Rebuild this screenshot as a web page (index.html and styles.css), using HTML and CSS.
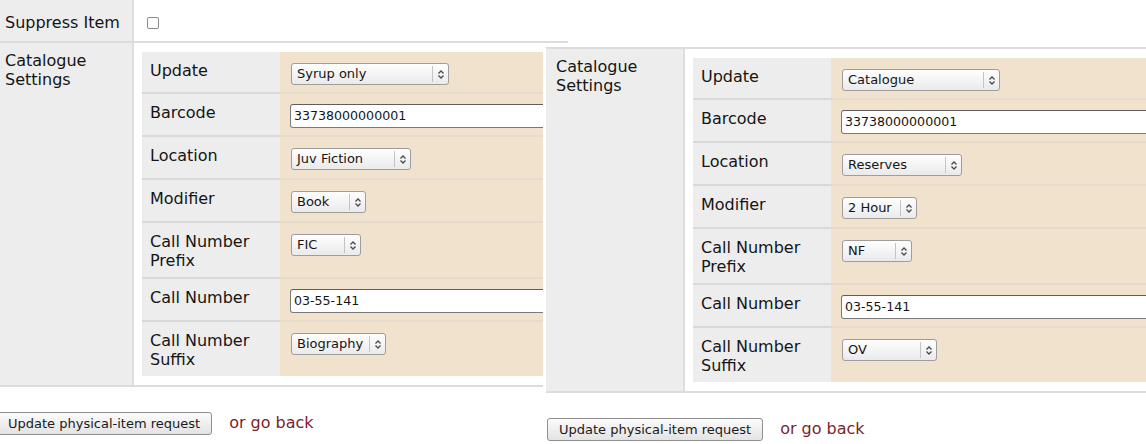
FILE: index.html
```html
<!DOCTYPE html>
<html lang="en">
<head>
<meta charset="utf-8">
<title>Update physical-item request</title>
<link rel="stylesheet" href="styles.css">
</head>
<body>
<div class="desk">

  <section class="shot shot-a">
    <div class="page page-a">
      <div class="orow stub">
        <div class="olabel"></div>
        <div class="ovalue"></div>
      </div>
      <div class="orow">
        <div class="olabel">Suppress Item</div>
        <div class="ovalue"><span class="checkbox"></span></div>
      </div>
      <div class="orow last">
        <div class="olabel">Catalogue Settings</div>
        <div class="ovalue cat">
          <div class="itable">
            <div class="irow">
              <div class="ilabel">Update</div>
              <div class="ivalue"><div class="select w-update"><span class="sel-text">Syrup only</span><span class="sel-btn"><svg width="8" height="11" viewBox="0 0 8 11"><path d="M1.5 4.5 L4 2 L6.5 4.5 M1.5 6.5 L4 9 L6.5 6.5" fill="none" stroke="#4a4a4a" stroke-width="1.3"/></svg></span></div></div>
            </div>
            <div class="irow">
              <div class="ilabel">Barcode</div>
              <div class="ivalue"><div class="input">33738000000001</div></div>
            </div>
            <div class="irow">
              <div class="ilabel">Location</div>
              <div class="ivalue"><div class="select w-location"><span class="sel-text">Juv Fiction</span><span class="sel-btn"><svg width="8" height="11" viewBox="0 0 8 11"><path d="M1.5 4.5 L4 2 L6.5 4.5 M1.5 6.5 L4 9 L6.5 6.5" fill="none" stroke="#4a4a4a" stroke-width="1.3"/></svg></span></div></div>
            </div>
            <div class="irow">
              <div class="ilabel">Modifier</div>
              <div class="ivalue"><div class="select w-modifier"><span class="sel-text">Book</span><span class="sel-btn"><svg width="8" height="11" viewBox="0 0 8 11"><path d="M1.5 4.5 L4 2 L6.5 4.5 M1.5 6.5 L4 9 L6.5 6.5" fill="none" stroke="#4a4a4a" stroke-width="1.3"/></svg></span></div></div>
            </div>
            <div class="irow">
              <div class="ilabel">Call Number Prefix</div>
              <div class="ivalue"><div class="select w-prefix"><span class="sel-text">FIC</span><span class="sel-btn"><svg width="8" height="11" viewBox="0 0 8 11"><path d="M1.5 4.5 L4 2 L6.5 4.5 M1.5 6.5 L4 9 L6.5 6.5" fill="none" stroke="#4a4a4a" stroke-width="1.3"/></svg></span></div></div>
            </div>
            <div class="irow">
              <div class="ilabel">Call Number</div>
              <div class="ivalue"><div class="input">03-55-141</div></div>
            </div>
            <div class="irow">
              <div class="ilabel">Call Number Suffix</div>
              <div class="ivalue"><div class="select w-suffix"><span class="sel-text">Biography</span><span class="sel-btn"><svg width="8" height="11" viewBox="0 0 8 11"><path d="M1.5 4.5 L4 2 L6.5 4.5 M1.5 6.5 L4 9 L6.5 6.5" fill="none" stroke="#4a4a4a" stroke-width="1.3"/></svg></span></div></div>
            </div>
          </div>
        </div>
      </div>
      <div class="actions">
        <button class="btn" type="button">Update physical-item request</button>
        <a class="back" href="#">or go back</a>
      </div>
    </div>
  </section>

  <section class="shot shot-b">
    <div class="page">
      <div class="orow last">
        <div class="olabel">Catalogue Settings</div>
        <div class="ovalue cat">
          <div class="itable">
            <div class="irow">
              <div class="ilabel">Update</div>
              <div class="ivalue"><div class="select w-update"><span class="sel-text">Catalogue</span><span class="sel-btn"><svg width="8" height="11" viewBox="0 0 8 11"><path d="M1.5 4.5 L4 2 L6.5 4.5 M1.5 6.5 L4 9 L6.5 6.5" fill="none" stroke="#4a4a4a" stroke-width="1.3"/></svg></span></div></div>
            </div>
            <div class="irow">
              <div class="ilabel">Barcode</div>
              <div class="ivalue"><div class="input">33738000000001</div></div>
            </div>
            <div class="irow">
              <div class="ilabel">Location</div>
              <div class="ivalue"><div class="select w-location"><span class="sel-text">Reserves</span><span class="sel-btn"><svg width="8" height="11" viewBox="0 0 8 11"><path d="M1.5 4.5 L4 2 L6.5 4.5 M1.5 6.5 L4 9 L6.5 6.5" fill="none" stroke="#4a4a4a" stroke-width="1.3"/></svg></span></div></div>
            </div>
            <div class="irow">
              <div class="ilabel">Modifier</div>
              <div class="ivalue"><div class="select w-modifier"><span class="sel-text">2 Hour</span><span class="sel-btn"><svg width="8" height="11" viewBox="0 0 8 11"><path d="M1.5 4.5 L4 2 L6.5 4.5 M1.5 6.5 L4 9 L6.5 6.5" fill="none" stroke="#4a4a4a" stroke-width="1.3"/></svg></span></div></div>
            </div>
            <div class="irow">
              <div class="ilabel">Call Number Prefix</div>
              <div class="ivalue"><div class="select w-prefix"><span class="sel-text">NF</span><span class="sel-btn"><svg width="8" height="11" viewBox="0 0 8 11"><path d="M1.5 4.5 L4 2 L6.5 4.5 M1.5 6.5 L4 9 L6.5 6.5" fill="none" stroke="#4a4a4a" stroke-width="1.3"/></svg></span></div></div>
            </div>
            <div class="irow">
              <div class="ilabel">Call Number</div>
              <div class="ivalue"><div class="input">03-55-141</div></div>
            </div>
            <div class="irow">
              <div class="ilabel">Call Number Suffix</div>
              <div class="ivalue"><div class="select w-suffix"><span class="sel-text">OV</span><span class="sel-btn"><svg width="8" height="11" viewBox="0 0 8 11"><path d="M1.5 4.5 L4 2 L6.5 4.5 M1.5 6.5 L4 9 L6.5 6.5" fill="none" stroke="#4a4a4a" stroke-width="1.3"/></svg></span></div></div>
            </div>
          </div>
        </div>
      </div>
      <div class="actions">
        <button class="btn" type="button">Update physical-item request</button>
        <a class="back" href="#">or go back</a>
      </div>
    </div>
  </section>

</div>
</body>
</html>
```

FILE: styles.css
```css
* { box-sizing: border-box; }

html, body {
  margin: 0;
  padding: 0;
  background: #ffffff;
}

body {
  font-family: "DejaVu Sans", "Noto Sans", sans-serif;
  font-size: 16px;
  line-height: 19px;
  color: #151515;
}

.desk {
  position: relative;
  width: 1146px;
  height: 444px;
  overflow: hidden;
  background: #ffffff;
}

/* the two screenshots laid over each other */
.shot {
  position: absolute;
  overflow: hidden;
  background: #ffffff;
}

.shot-a {
  left: 0;
  top: 0;
  width: 568px;
  height: 444px;
}

.page-a {
  margin-left: -5px;
}

.shot-b {
  left: 543px;
  top: 44px;
  width: 603px;
  height: 400px;
  padding: 3px 0 0 3px;
}

.page {
  width: 720px;
}

/* outer form table */
.orow {
  display: grid;
  grid-template-columns: 137px 1fr;
  border-top: 2px solid #dcdcdc;
}

.orow.stub {
  border-top: none;
  height: 3px;
}

.orow.last {
  border-bottom: 2px solid #dcdcdc;
}

.olabel {
  background: #ededed;
  padding: 8px 9px 9px 10px;
}

.ovalue {
  background: #ffffff;
  border-left: 2px solid #dedede;
  padding: 8px 8px 9px 8px;
}

.ovalue.cat {
  padding: 9px 8px 9px 8px;
}

.checkbox {
  display: block;
  width: 12px;
  height: 12px;
  margin: 4px 0 0 5px;
  border: 1px solid #8a8a8a;
  border-radius: 2px;
  background: #ffffff;
}

/* inner table */
.itable {
  width: 100%;
}

.irow {
  display: grid;
  grid-template-columns: 138px 1fr;
}

.ilabel {
  background: #ededed;
  padding: 9px 9px 7px 8px;
}

.ivalue {
  background: #f0e2cc;
  padding: 9px 10px 6px 10px;
}

.irow:first-child > .ivalue {
  padding-bottom: 5px;
}

.irow + .irow > .ilabel {
  border-top: 2px solid #d9d9d9;
}

.irow + .irow > .ivalue {
  border-top: 2px solid #e4dbcd;
}

/* select look-alike */
.select {
  display: flex;
  align-items: stretch;
  height: 22px;
  margin: 2px 0 2px 1px;
  border: 1px solid #9d9d9d;
  border-radius: 3px;
  background: linear-gradient(#fefefe, #eaeaea);
  font-size: 13px;
  line-height: 20px;
  color: #151515;
}

.sel-text {
  flex: 1;
  padding-left: 5px;
  white-space: nowrap;
  overflow: hidden;
}

.sel-btn {
  width: 16px;
  display: flex;
  align-items: center;
  justify-content: center;
  margin: 2px 0;
  border-left: 1px solid #c4c4c4;
}

.w-update { width: 158px; }
.w-location { width: 120px; }
.w-modifier { width: 75px; }
.w-prefix { width: 70px; }
.w-suffix { width: 95px; }

/* text input look-alike */
.input {
  width: 330px;
  height: 24px;
  margin: 1px 0 1px 0;
  border: 1px solid #7a7a7a;
  border-top-color: #5e5e5e;
  border-radius: 3px;
  background: #ffffff;
  padding: 0 3px;
  font-size: 12.6px;
  line-height: 22px;
  color: #151515;
}

/* action bar */
.actions {
  display: flex;
  align-items: baseline;
  margin-top: 25px;
  padding-left: 1px;
}

.btn {
  height: 23px;
  padding: 0 11px;
  border: 1px solid #8f8f8f;
  border-radius: 3px;
  background: linear-gradient(#fbfbfb, #e3e3e3);
  font-family: "DejaVu Sans", "Noto Sans", sans-serif;
  font-size: 13px;
  line-height: 21px;
  color: #1a1a1a;
}

.back {
  margin-left: 17px;
  color: #7a1f2c;
  text-decoration: none;
  font-size: 16px;
}
```
